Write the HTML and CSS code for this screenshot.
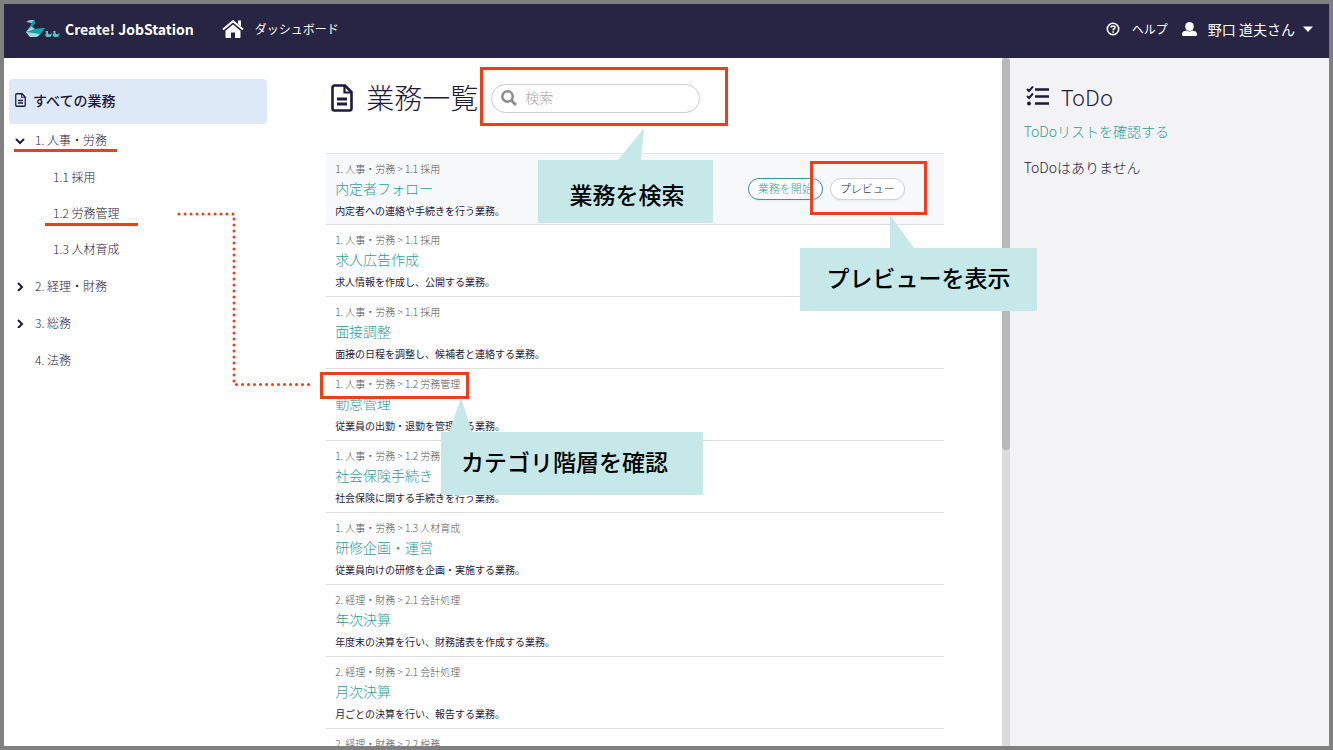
FILE: index.html
```html
<!DOCTYPE html>
<html lang="ja">
<head>
<meta charset="utf-8">
<title>Create! JobStation</title>
<link rel="stylesheet" href="styles.css">
</head>
<body>
<svg class="sprite" aria-hidden="true">
  <symbol id="doc" viewBox="0 0 22 28">
    <path d="M3.500 1.500H14L20.500 8V24.500a2 2 0 0 1-2 2h-15a2 2 0 0 1-2-2v-21a2 2 0 0 1 2-2z" fill="none" stroke="currentColor" stroke-width="2.600"/>
    <path d="M13.500 1.500V8.500H20.500" fill="none" stroke="currentColor" stroke-width="2.200"/>
    <path d="M6 15h10M6 20h10" stroke="currentColor" stroke-width="2.800"/>
  </symbol>
</svg>
<div class="app">
  <header class="topbar">
    <a class="brand" href="#">
      <svg class="brand-mark" viewBox="0 0 34 18" aria-hidden="true">
        <path d="M1 1L4 0H8.500L9.500 3L6.500 6.500L9 9L19 8L14 15L11 17H4L0 12L4 6.500L5.500 3z" fill="#159ba1"/>
        <path d="M0 2L4 0H8L5.500 3z" fill="#7fd3d0"/>
        <path d="M5 6.500L0 12L9 9z" fill="#9adcd8"/>
        <path d="M0 12L4 17H11L14 14L8 13z" fill="#a4d9da"/>
        <path d="M9 9L19 8L14 14L5 12z" fill="#15a5a9"/>
        <path d="M19.500 11h2.500v2.500l1.500 1 3-1.500-2 4h-4L19 15l1.200-1.500z" fill="#5fc1c0"/>
        <path d="M27 11h2.500v2.500l1.500 1 3-1.500-2 4h-4L26.500 15l1.200-1.500z" fill="#5fc1c0"/>
      </svg>
      <span>Create! JobStation</span>
    </a>
    <a class="toplink" href="#">
      <svg class="home" viewBox="0 0 22 18" aria-hidden="true">
        <path d="M1 9.500L11 1.200L21 9.500" fill="none" stroke="currentColor" stroke-width="2"/>
        <path d="M16 0.500h3v6l-3-2.500zM11 4.500L18.500 10.700V17a1 1 0 0 1-1 1H13v-5.500H9V18H4.500a1 1 0 0 1-1-1V10.700z" fill="currentColor"/>
      </svg>
      <span>ダッシュボード</span>
    </a>
    <nav class="account">
      <a class="help" href="#">
        <svg class="help-icon" viewBox="0 0 14 14" fill="none" stroke="currentColor" stroke-width="1.600" aria-hidden="true">
          <circle cx="7" cy="7" r="5.700"/>
          <path d="M5 5.600C5 3.500 9 3.500 9 5.600C9 6.900 7.100 6.700 7.100 8.200M7.100 9.200v1.500"/>
        </svg>
        <span>ヘルプ</span>
      </a>
      <button class="user" type="button">
        <svg class="person" viewBox="0 0 15 14" fill="currentColor" aria-hidden="true">
          <ellipse cx="7.500" cy="4.500" rx="4.300" ry="4.500"/>
          <path d="M0 12.500C0 9.500 2 9 4.500 8.500Q7.500 10.500 10.500 8.500C13 9 15 9.500 15 12.500Q15 14 13.500 14h-12Q0 14 0 12.500z"/>
        </svg>
        <span>野口 道夫さん</span>
        <svg class="caret" viewBox="0 0 10 6" aria-hidden="true"><path d="M0 0.500h10L5 6z" fill="currentColor"/></svg>
      </button>
    </nav>
  </header>

  <div class="body">
    <nav class="sidebar">
      <a class="all" href="#"><svg class="doc-small" aria-hidden="true"><use href="#doc"/></svg>すべての業務</a>
      <ul class="tree">
        <li><a href="#"><svg class="chev" viewBox="0 0 10 10"><path d="M1 4l4 4 4-4"/></svg>1. 人事・労務</a>
          <ul class="subtree">
            <li><a href="#">1.1 採用</a></li>
            <li><a href="#">1.2 労務管理</a></li>
            <li><a href="#">1.3 人材育成</a></li>
          </ul>
        </li>
        <li><a href="#"><svg class="chev" viewBox="0 0 10 10"><path d="M3 2l4 4-4 4"/></svg>2. 経理・財務</a></li>
        <li><a href="#"><svg class="chev" viewBox="0 0 10 10"><path d="M3 2l4 4-4 4"/></svg>3. 総務</a></li>
        <li><a href="#"><span class="chev"></span>4. 法務</a></li>
      </ul>
    </nav>

    <main class="main">
      <div class="content">
        <div class="heading">
          <svg class="doc-large" aria-hidden="true"><use href="#doc"/></svg>
          <h1>業務一覧</h1>
          <label class="search">
            <svg viewBox="0 0 16 16" fill="none" stroke="currentColor" aria-hidden="true"><circle cx="6.500" cy="6.500" r="5.200" stroke-width="2.500"/><path d="M10.500 10.500l4.500 4.500" stroke-width="3"/></svg>
            <input type="search" placeholder="検索" aria-label="検索">
          </label>
        </div>
        <ul class="list">
          <li class="active">
            <div class="info"><p class="path">1. 人事・労務 &gt; 1.1 採用</p><a href="#">内定者フォロー</a><p class="desc">内定者への連絡や手続きを行う業務。</p></div>
            <div class="actions"><button class="start" type="button">業務を開始</button><button type="button">プレビュー</button></div>
          </li>
          <li><div class="info"><p class="path">1. 人事・労務 &gt; 1.1 採用</p><a href="#">求人広告作成</a><p class="desc">求人情報を作成し、公開する業務。</p></div></li>
          <li><div class="info"><p class="path">1. 人事・労務 &gt; 1.1 採用</p><a href="#">面接調整</a><p class="desc">面接の日程を調整し、候補者と連絡する業務。</p></div></li>
          <li><div class="info"><p class="path">1. 人事・労務 &gt; 1.2 労務管理</p><a href="#">勤怠管理</a><p class="desc">従業員の出勤・退勤を管理する業務。</p></div></li>
          <li><div class="info"><p class="path">1. 人事・労務 &gt; 1.2 労務管理</p><a href="#">社会保険手続き</a><p class="desc">社会保険に関する手続きを行う業務。</p></div></li>
          <li><div class="info"><p class="path">1. 人事・労務 &gt; 1.3 人材育成</p><a href="#">研修企画・運営</a><p class="desc">従業員向けの研修を企画・実施する業務。</p></div></li>
          <li><div class="info"><p class="path">2. 経理・財務 &gt; 2.1 会計処理</p><a href="#">年次決算</a><p class="desc">年度末の決算を行い、財務諸表を作成する業務。</p></div></li>
          <li><div class="info"><p class="path">2. 経理・財務 &gt; 2.1 会計処理</p><a href="#">月次決算</a><p class="desc">月ごとの決算を行い、報告する業務。</p></div></li>
          <li><div class="info"><p class="path">2. 経理・財務 &gt; 2.2 税務</p></div></li>
        </ul>
      </div>
      <div class="track"><div class="thumb"></div></div>
    </main>

    <aside class="todo">
      <h2>
        <svg viewBox="0 0 24 20" fill="none" stroke="currentColor" aria-hidden="true">
          <path d="M9 3.500h14M9 10.500h14M9 17.500h14" stroke-width="2.600"/>
          <path d="M1 3l2 2 4-4.500M1 10l2 2 4-4.500" stroke-width="1.900"/>
          <circle cx="3" cy="17.500" r="2" fill="currentColor" stroke="none"/>
        </svg>ToDo
      </h2>
      <a href="#">ToDoリストを確認する</a>
      <p>ToDoはありません</p>
    </aside>
  </div>

  <div class="mark underline-parent"></div>
  <div class="mark underline-child"></div>
  <svg class="mark dots" viewBox="0 0 136 176" aria-hidden="true"><path d="M2 2H57V172.500H134"/></svg>
  <div class="mark box box-search"></div>
  <div class="mark box box-preview"></div>
  <div class="mark box box-path"></div>
  <div class="mark callout callout-search"><svg viewBox="0 0 26 34"><path d="M0 34L26 2L23 34z"/></svg>業務を検索</div>
  <div class="mark callout callout-preview"><svg viewBox="0 0 26 34"><path d="M0 1L24 34H0z"/></svg>プレビューを表示</div>
  <div class="mark callout callout-path"><svg viewBox="0 0 26 34"><path d="M0 34L12 0L23 34z"/></svg>カテゴリ階層を確認</div>
</div>
</body>
</html>
```
FILE: styles.css
```css
* { box-sizing: border-box; }
body, h1, h2, p, ul { margin: 0; padding: 0; }
ul { list-style: none; }
a { color: inherit; text-decoration: none; }
button, input { font: inherit; color: inherit; }
body {
  font-family: "Noto Sans CJK JP", "Noto Sans", sans-serif;
  font-weight: 300;
  font-size: 12px;
  line-height: 20px;
  color: #1f1a3d;
}
.sprite { position: absolute; width: 0; height: 0; }
.app {
  position: relative;
  display: flex;
  flex-direction: column;
  height: 100vh;
  border: 4px solid #808080;
  background: #fff;
  overflow: hidden;
}

.topbar {
  display: flex;
  align-items: center;
  flex: none;
  height: 54px;
  padding: 0 16px 5px 22px;
  background: #282444;
  color: #fff;
  font-weight: 400;
}
.brand, .toplink, .help, .user { display: flex; align-items: center; }
.brand { gap: 5px; font-size: 14px; font-weight: 700; }
.brand-mark { width: 34px; height: 18px; }
.toplink { gap: 11px; margin-left: 28px; }
.home { width: 22px; height: 18px; }
.account { display: flex; gap: 14px; margin-left: auto; }
.help { gap: 12px; }
.help-icon { width: 14px; height: 14px; }
.user { gap: 11px; padding: 0; border: 0; background: none; font-size: 14px; }
.person { width: 15px; height: 14px; }
.caret { width: 10px; height: 6px; margin-left: -3px; }

.body {
  flex: 1;
  min-height: 0;
  display: grid;
  grid-template-columns: 22.5% 1fr 24.1%;
}
.sidebar { padding: 21px 35px 0 5px; }
.all {
  display: flex;
  align-items: center;
  gap: 7px;
  height: 45px;
  padding: 0 0 3px 6px;
  border-radius: 4px;
  background: #dde9f7;
  font-size: 14px;
  font-weight: 500;
}
.doc-small { width: 11px; height: 14px; }
.tree { margin-top: -2px; }
.tree a { display: flex; align-items: center; height: 36px; }
.tree > li { margin-bottom: 1px; }
.tree > li > a { gap: 10px; padding-left: 6px; }
.subtree { padding-top: 1px; }
.subtree a { padding-left: 44px; }
.chev { width: 10px; height: 10px; fill: none; stroke: currentColor; stroke-width: 2; }

.main { display: flex; min-width: 0; min-height: 0; overflow: hidden; }
.content { flex: 1; min-width: 0; padding: 20px 58px 0 24px; }
.heading { display: flex; align-items: center; height: 40px; padding-left: 5px; }
.doc-large { width: 22px; height: 28px; }
h1 { margin: 0 13px; padding-bottom: 2px; font-size: 28px; font-weight: 300; line-height: 40px; white-space: nowrap; }
.search {
  display: flex;
  align-items: center;
  gap: 8px;
  width: 209px;
  height: 29px;
  padding: 0 9px;
  border: 1px solid #ccc;
  border-radius: 15px;
  color: #8c8c8c;
}
.search svg { width: 16px; height: 16px; flex: none; }
.search input { min-width: 0; width: 100%; padding: 0 0 2px; border: 0; outline: 0; background: none; font-size: 14px; }
.search input::placeholder { color: #aaa; opacity: 1; }
.list { margin-top: 35px; border-top: 1px solid #e3e5e8; }
.list li {
  display: flex;
  justify-content: space-between;
  height: 72px;
  padding: 6px 39px 0 9px;
  border-bottom: 1px solid #dcdee2;
}
.list li:first-child { height: 71px; }
.list .active { background: #f7f8fa; }
.info a { display: block; font-size: 14px; line-height: 21px; color: #309c99; }
.path { font-size: 10px; line-height: 18px; color: #555; }
.desc { font-size: 10px; font-weight: 400; line-height: 24px; }
.actions { display: flex; gap: 7px; padding-top: 18px; }
.actions button {
  width: 75px;
  height: 22px;
  padding: 0 0 2px;
  border: 1px solid #d0d2d8;
  border-radius: 11px;
  background: #fff;
  font-size: 11px;
  line-height: 18px;
  box-shadow: 0 1px 2px #0001;
}
.actions .start { border-color: #309c99; color: #309c99; }
.track { width: 8px; flex: none; background: #dadadc; }
.thumb { height: 57%; border-radius: 4px; background: #b8b8b8; }

.todo { padding: 19px 14px; background: #f3f3f5; font-size: 14px; }
.todo h2 { display: flex; align-items: center; gap: 11px; padding-left: 2px; font-size: 22px; font-weight: 300; line-height: 38px; }
.todo h2 svg { width: 24px; height: 20px; }
.todo a { display: block; margin-top: 6px; color: #309c99; }
.todo p { margin-top: 16px; }

.mark { position: absolute; }
.underline-parent, .underline-child { height: 3px; background: #ee4016; }
.underline-parent { left: 10px; top: 145px; width: 103px; }
.underline-child { left: 41px; top: 219px; width: 93px; }
.dots {
  left: 173px;
  top: 208px;
  width: 136px;
  height: 176px;
  fill: none;
  stroke: #ee4016;
  stroke-width: 3;
  stroke-linecap: round;
  stroke-dasharray: 0 6;
}
.box { border: 3px solid #ee4016; }
.box-search { left: 476px; top: 63px; width: 248px; height: 59px; }
.box-preview { left: 806px; top: 157px; width: 117px; height: 54px; }
.box-path { left: 316px; top: 368px; width: 149px; height: 27px; }
.callout {
  display: flex;
  align-items: center;
  justify-content: center;
  height: 63px;
  padding-bottom: 5px;
  background: #c7e8e9;
  color: #000;
  font-size: 23px;
  font-weight: 500;
  line-height: 36px;
  white-space: nowrap;
}
.callout svg { position: absolute; bottom: 100%; width: 26px; height: 34px; fill: #c7e8e9; }
.callout-search { left: 534px; top: 156px; width: 175px; padding: 5px 0 0 3px; }
.callout-search svg { left: 80px; }
.callout-preview { left: 796px; top: 244px; width: 237px; }
.callout-preview svg { left: 90px; }
.callout-path { left: 437px; top: 428px; width: 262px; padding-right: 15px; }
.callout-path svg { left: 8px; }
```
